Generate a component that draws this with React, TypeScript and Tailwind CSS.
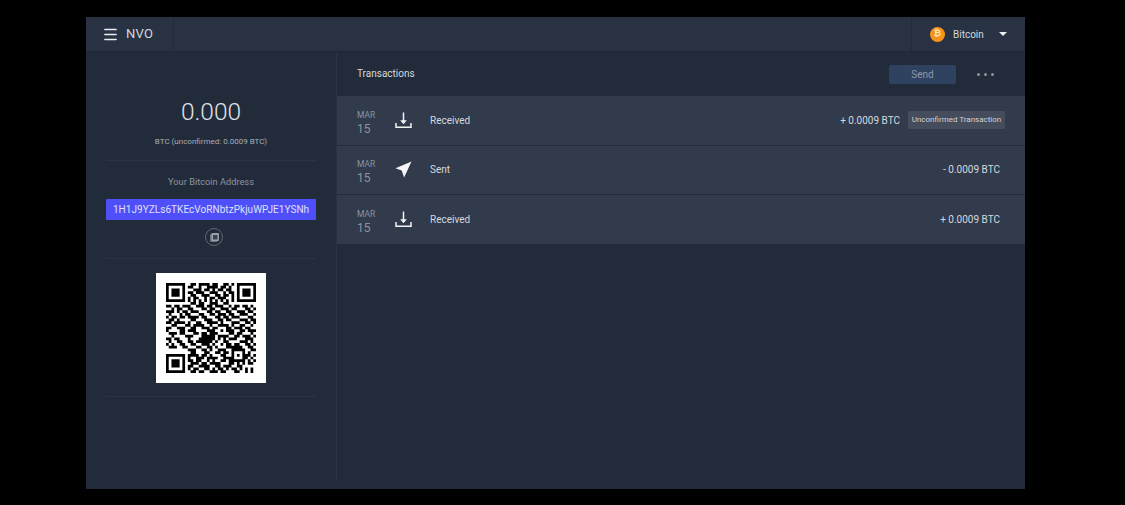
import { Menu } from 'lucide-react';

const SIZE = 33;

// rough copy of the code in the shot, finders and alignment square stamped on top
const QR_ROWS = [
  '000000000110111101100110100000000',
  '000000001100100111101101000000000',
  '000000000011101101011011000000000',
  '000000001101110011100101100000000',
  '000000000110011100110110100000000',
  '000000001011001011011100100000000',
  '000000001010101010101010100000000',
  '000000000110110011100110000000000',
  '110110111001110110111001011011010',
  '001011001100011011001110110001101',
  '111010110111000110110011001110110',
  '010001011000110011011101100111001',
  '101101101111011000110110111000110',
  '011010000110001110011011000111011',
  '110111101001100111101000111001101',
  '001100011011110010011110100110010',
  '110011100110011101100011011101100',
  '100001101110000111001011100110111',
  '011101100011011011100001101100010',
  '001000011100011111011110011011101',
  '110110001000111111010101110001110',
  '010011001101111110100110000111010',
  '101001100110011101001011011001101',
  '011100110001100110100011111100110',
  '000000001110011010011100000110011',
  '000000000110001100110110000010100',
  '000000001111011010001100000001101',
  '000000001001110111100111000011010',
  '000000001101100101001101111100101',
  '000000000111011011110001101010110',
  '000000001100111100110111001100000',
  '000000001011001101011010110101010',
  '000000000110110011101100011001010',
];

const stamp = (grid: boolean[][], ox: number, oy: number, size: number) => {
  for (let y = 0; y < size; y++) {
    for (let x = 0; x < size; x++) {
      const ring = Math.min(x, y, size - 1 - x, size - 1 - y);
      grid[oy + y][ox + x] = ring !== 1;
    }
  }
};

const qrPath = () => {
  const grid = QR_ROWS.map(r => r.split('').map(c => c === '1'));
  stamp(grid, 0, 0, 7);
  stamp(grid, SIZE - 7, 0, 7);
  stamp(grid, 0, SIZE - 7, 7);
  stamp(grid, 24, 24, 5);
  let d = '';
  grid.forEach((row, y) => row.forEach((on, x) => {
    if (on) d += `M${x} ${y}h1v1h-1z`;
  }));
  return d;
};

const QrCode = () => (
  <svg viewBox={`0 0 ${SIZE} ${SIZE}`} className="w-[90px] h-[90px] blur-[0.4px]">
    <path d={qrPath()} fill="#000" />
  </svg>
);

const ReceivedIcon = () => (
  <svg width="17" height="17" viewBox="0 0 17 17" fill="none" stroke="#f2f3f5" strokeWidth="1.5">
    <path d="M1 11v4.2h15V11" />
    <path d="M8.5 0.5v10" />
    <path d="M5.2 8.2h6.6l-3.3 4z" fill="#f2f3f5" stroke="none" />
  </svg>
);

const SentIcon = () => (
  <svg width="17" height="17" viewBox="0 0 17 17">
    <path d="M16.5 0.5L0.5 7.2l6.2 2.2 2.4 7.1z" fill="#f5f6f8" />
  </svg>
);

const rows = [
  { kind: 'Received', amount: '+ 0.0009 BTC', pending: true },
  { kind: 'Sent', amount: '- 0.0009 BTC', pending: false },
  { kind: 'Received', amount: '+ 0.0009 BTC', pending: false },
];

export default function App() {
  return (
    <div className="w-[1125px] h-[505px] bg-black pt-[17px] pl-[86px] overflow-hidden font-['Roboto',sans-serif]">
      <div className="w-[939px] h-[472px] bg-[#222b3a] flex flex-col">
        {/* Top bar */}
        <header className="h-[35px] shrink-0 bg-[#283242] border-b border-[#1f2735] flex items-center">
          <div className="w-[88px] h-full border-r border-[#222b39] flex items-center pl-[16px] gap-[7px]">
            <Menu size={17} strokeWidth={2} className="text-[#eceef1]" />
            <span className="text-[13px] text-[#d5d8de] tracking-[0.3px]">NVO</span>
          </div>
          <div className="flex-1" />
          <div className="w-[114px] h-full border-l border-[#222b39] flex items-center pl-[18px]">
            <span className="w-[15px] h-[15px] rounded-full bg-[#f7931a] flex items-center justify-center text-[9px] font-bold text-[#fde3c0]">
              ₿
            </span>
            <span className="ml-[8px] text-[10px] text-[#d5d8de]">Bitcoin</span>
            <span className="ml-[15px] w-0 h-0 border-x-[4px] border-x-transparent border-t-[4px] border-t-[#eceef1]" />
          </div>
        </header>

        <div className="flex-1 flex min-h-0">
          {/* Wallet column */}
          <aside className="w-[251px] shrink-0 mb-[8px] border-r border-[#2a3342] px-[20px] flex flex-col">
            <div className="h-[109px] shrink-0 border-b border-[#2b3444] flex flex-col items-center pt-[43px]">
              <div className="text-[24.5px] leading-[34px] font-light text-[#dfe2e6]">0.000</div>
              <div className="mt-[7px] text-[8px] leading-[12px] text-[#a9afb9]">
                BTC (unconfirmed: 0.0009 BTC)
              </div>
            </div>
            <div className="h-[98px] shrink-0 border-b border-[#2b3444] flex flex-col items-center pt-[14px]">
              <div className="text-[9.25px] leading-[13px] text-[#8d94a1]">Your Bitcoin Address</div>
              <div className="mt-[11px] w-[210px] h-[21px] bg-[#4f4ffa] rounded-[1px] flex items-center justify-center text-[10px] text-[#dfe0fa] tracking-[0.05px]">
                1H1J9YZLs6TKEcVoRNbtzPkjuWPJE1YSNh
              </div>
              <div className="mt-[8px] ml-[6px] w-[18px] h-[18px] rounded-full border border-[#5f6775] flex items-center justify-center">
                <svg width="9" height="9" viewBox="0 0 9 9">
                  <rect x="0" y="1" width="7.5" height="8" rx="1" fill="#6d7481" />
                  <rect x="1.5" y="0" width="7.5" height="8" rx="1" fill="#99a0ac" />
                  <rect x="3" y="2" width="4.5" height="4.5" fill="#3a4352" />
                </svg>
              </div>
            </div>
            <div className="h-[138px] shrink-0 border-b border-[#2b3444] flex justify-center pt-[14px]">
              <div className="w-[110px] h-[110px] bg-white flex items-center justify-center">
                <QrCode />
              </div>
            </div>
          </aside>

          {/* Transactions */}
          <main className="flex-1 min-w-0 flex flex-col">
            <div className="h-[44px] shrink-0 flex items-center pl-[20px] pr-[31px]">
              <span className="text-[10px] text-[#d5d8de] -mt-[1px]">Transactions</span>
              <div className="flex-1" />
              <button className="w-[67px] h-[19px] rounded-[2px] bg-[#2f4260] text-[10px] text-[#8a99ae]">
                Send
              </button>
              <div className="ml-[21px] flex gap-[4px]">
                <span className="w-[3px] h-[3px] rounded-full bg-[#8d94a1]" />
                <span className="w-[3px] h-[3px] rounded-full bg-[#8d94a1]" />
                <span className="w-[3px] h-[3px] rounded-full bg-[#8d94a1]" />
              </div>
            </div>
            <div className="flex flex-col gap-[1px]">
              {rows.map((row, i) => (
                <div
                  key={i}
                  className={`h-[48.5px] bg-[#323b4b] flex items-center pl-[20px] ${row.pending ? 'pr-[20px]' : 'pr-[25px]'}`}
                >
                  <div className="w-[38px] pt-[5px] text-[#8d94a1]">
                    <div className="text-[8.5px] leading-[11px]">MAR</div>
                    <div className="text-[12px] leading-[14px] mt-[1px]">15</div>
                  </div>
                  {row.kind === 'Sent' ? <SentIcon /> : <ReceivedIcon />}
                  <span className="ml-[18px] text-[10px] text-[#d5d8de]">{row.kind}</span>
                  <div className="flex-1" />
                  <span className="text-[10px] text-[#d5d8de]">{row.amount}</span>
                  {row.pending && (
                    <span className="ml-[8px] w-[97px] h-[18px] rounded-[1px] bg-[#454d5c] flex items-center justify-center text-[8px] text-[#cfd2d8]">
                      Unconfirmed Transaction
                    </span>
                  )}
                </div>
              ))}
            </div>
          </main>
        </div>
      </div>
    </div>
  );
}
